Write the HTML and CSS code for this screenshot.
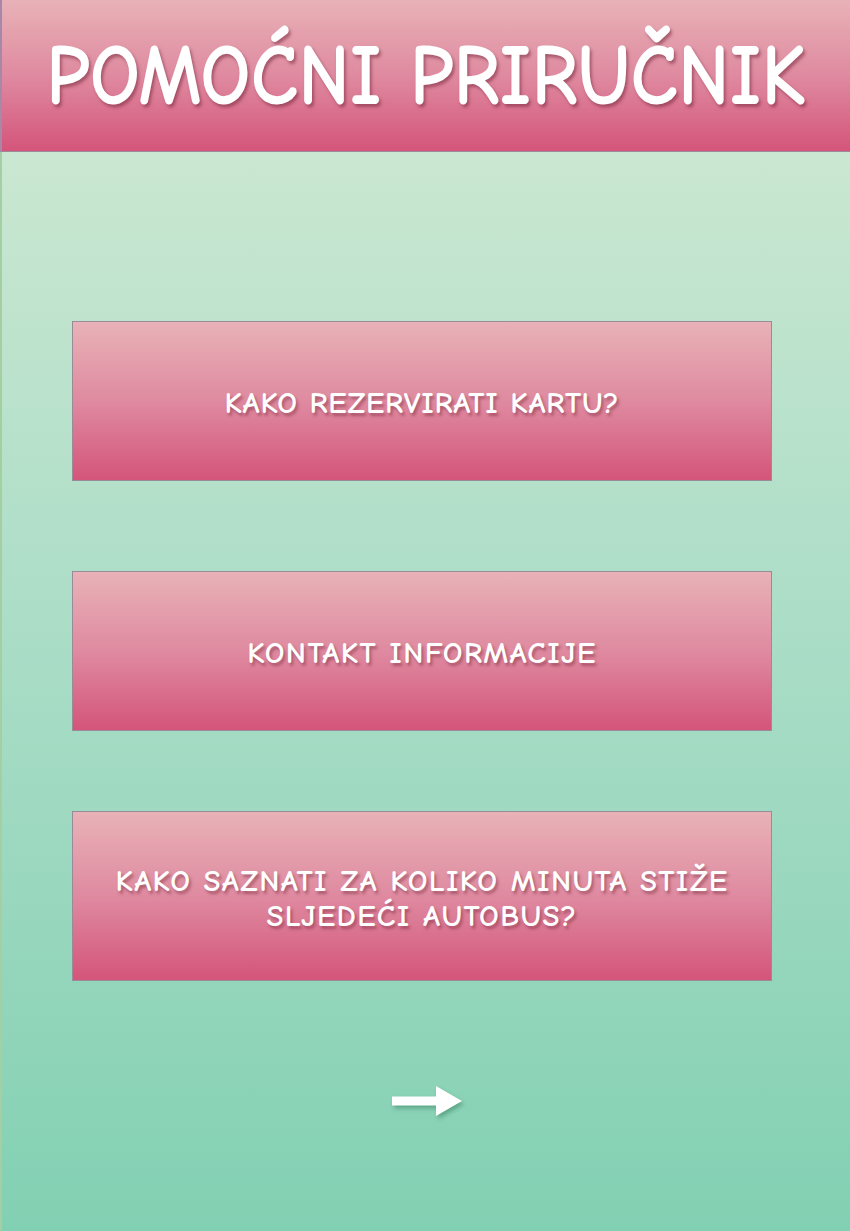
FILE: index.html
```html
<!DOCTYPE html>
<html lang="hr">
<head>
<meta charset="utf-8">
<title>Pomoćni priručnik</title>
<link rel="stylesheet" href="styles.css">
</head>
<body>
<div class="page">
  <header class="header">
    <h1 class="title">POMOĆNI PRIRUČNIK</h1>
  </header>
  <main class="main">
    <a class="btn btn-first" href="#">KAKO REZERVIRATI KARTU?</a>
    <a class="btn btn-second" href="#">KONTAKT INFORMACIJE</a>
    <a class="btn btn-third" href="#">KAKO SAZNATI ZA KOLIKO MINUTA STIŽE<br>SLJEDEĆI AUTOBUS?</a>
    <div class="arrow-row">
      <svg class="arrow" width="72" height="34" viewBox="0 0 72 34">
        <path d="M0 12.5 H44 V2 L70 17 L44 32 V21.5 H0 Z" fill="#ffffff"/>
      </svg>
    </div>
  </main>
</div>
</body>
</html>
```
FILE: styles.css
```css
html, body {
  margin: 0;
  padding: 0;
}
body {
  width: 850px;
  height: 1231px;
  overflow: hidden;
  font-family: "Comic Sans MS", "Comic Neue", "Open Sans", sans-serif;
}
.page {
  display: flex;
  flex-direction: column;
  height: 1231px;
  border-left: 2px solid #a3cfa3;
  box-sizing: border-box;
}
.header {
  height: 152px;
  box-sizing: border-box;
  background: linear-gradient(to bottom, #e8b2b7 0%, #df8aa0 50%, #d4557a 100%);
  border-bottom: 1px solid #9c8a98;
  margin-left: -2px;
  border-left: 2px solid #a888a8;
  display: flex;
  align-items: center;
  justify-content: center;
}
.title {
  margin: 0;
  color: #ffffff;
  font-weight: 700;
  font-size: 79px;
  letter-spacing: 0;
  transform: scaleY(1.1);
  text-shadow: 2px 3px 3px rgba(120, 40, 60, 0.55);
  padding-top: 0;
}
.main {
  flex: 1;
  background: linear-gradient(to bottom, #cae7d1 0%, #aedec8 40%, #82d0b3 100%);
  display: flex;
  flex-direction: column;
  align-items: center;
  padding-top: 169px;
  padding-right: 8px;
}
.btn {
  width: 700px;
  height: 160px;
  box-sizing: border-box;
  padding-top: 5px;
  border: 1px solid #9a8b9b;
  background: linear-gradient(to bottom, #e8b2b7 0%, #df8aa0 50%, #d4557a 100%);
  color: #ffffff;
  text-decoration: none;
  display: flex;
  align-items: center;
  justify-content: center;
  text-align: center;
  font-weight: 700;
  font-size: 31px;
  letter-spacing: 1.3px;
  line-height: 35px;
  text-shadow: 2px 3px 3px rgba(120, 40, 60, 0.5);
}
.btn-first {
  letter-spacing: 0.7px;
}
.btn-second {
  margin-top: 90px;
}
.btn-third {
  margin-top: 80px;
  height: 170px;
}
.arrow-row {
  margin-top: 103px;
  display: flex;
  justify-content: center;
  width: 700px;
  padding-left: 12px;
}
.arrow {
  filter: drop-shadow(2px 3px 2px rgba(40, 110, 80, 0.45));
}
```
